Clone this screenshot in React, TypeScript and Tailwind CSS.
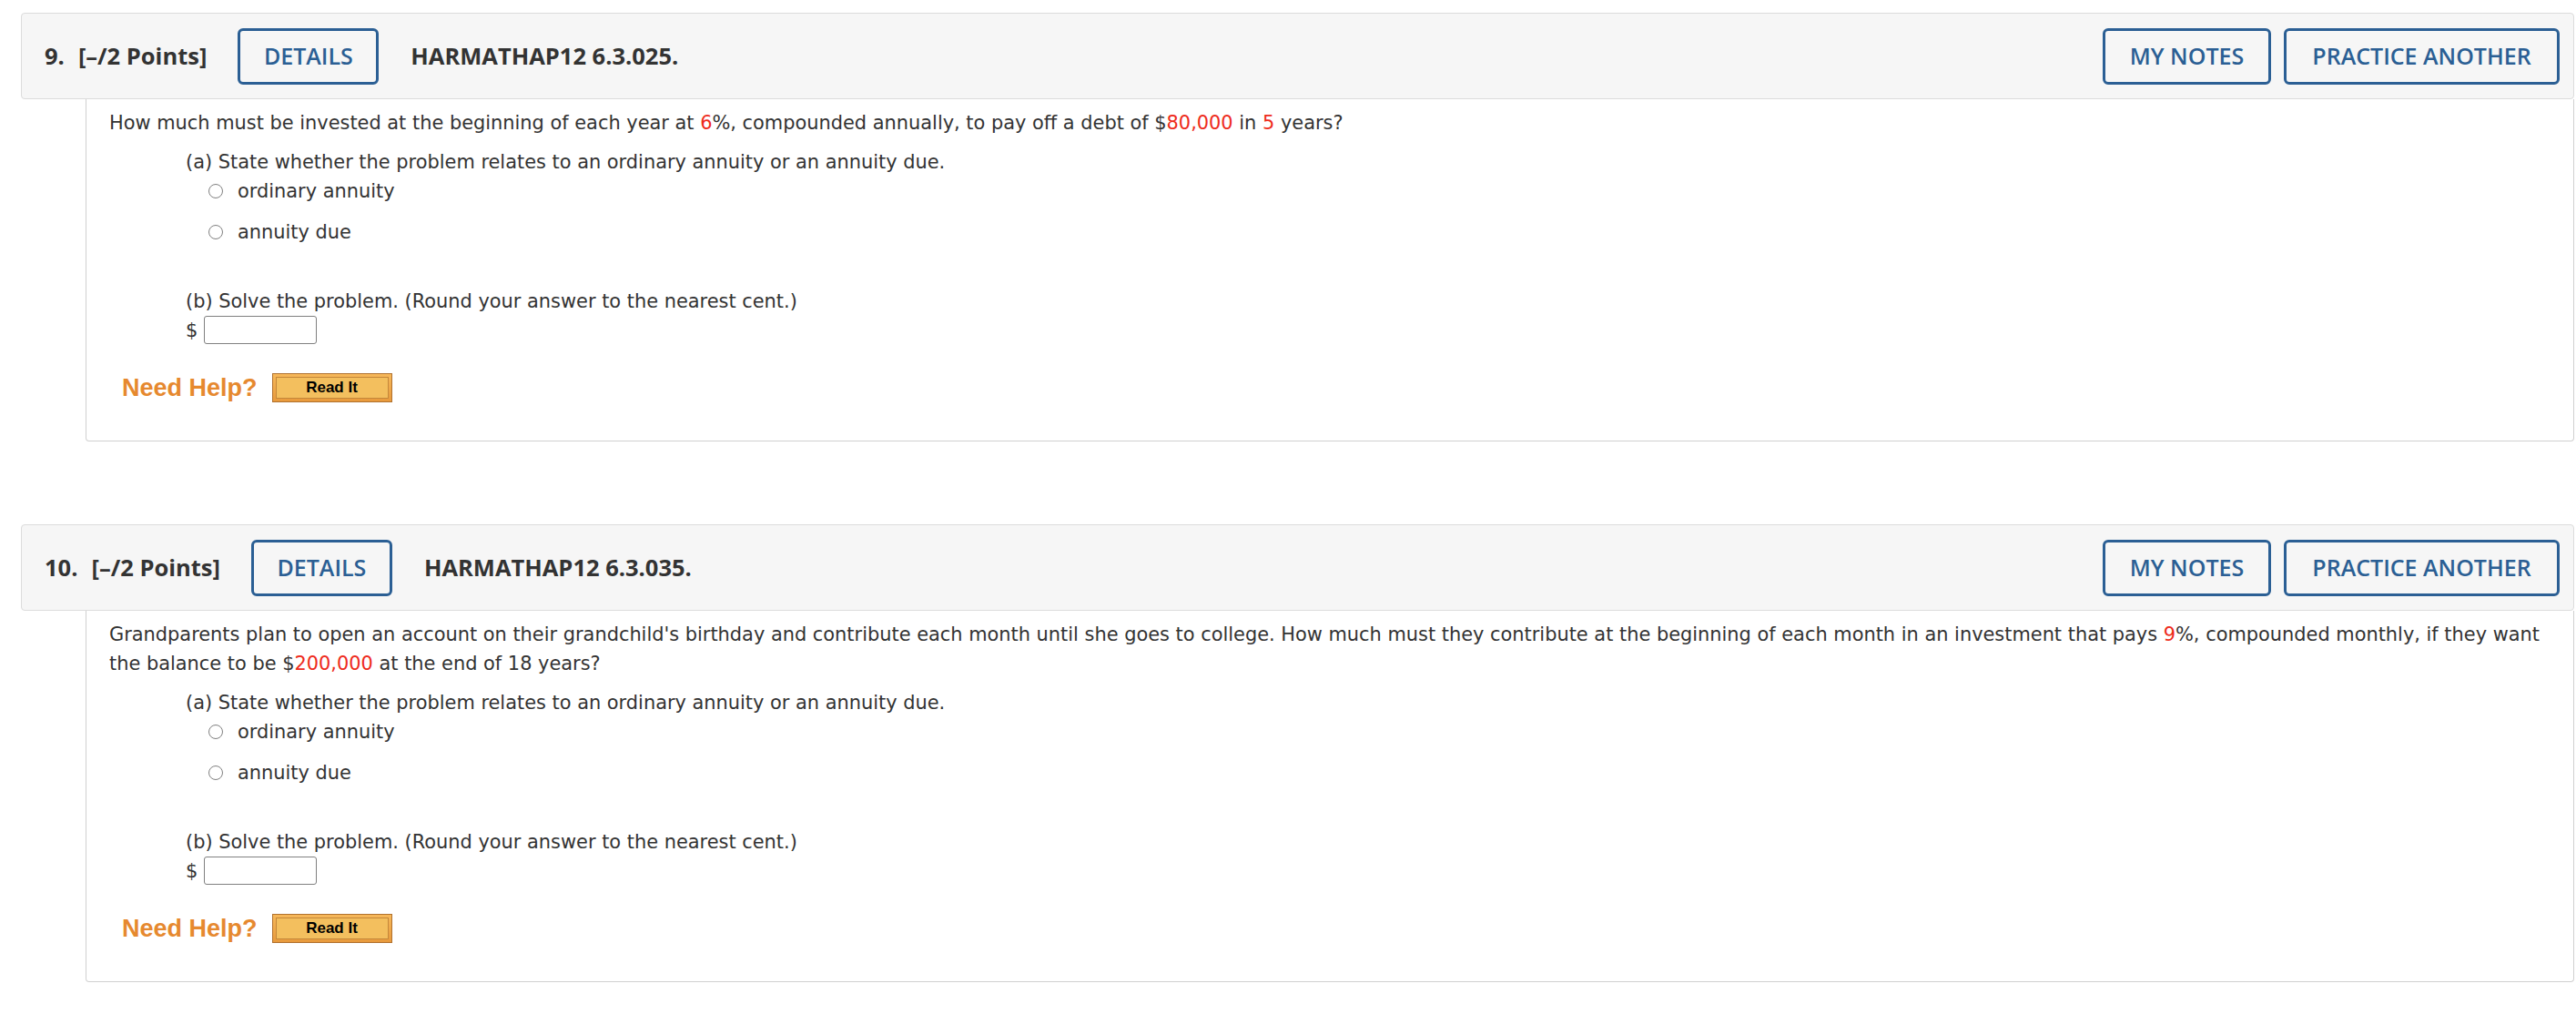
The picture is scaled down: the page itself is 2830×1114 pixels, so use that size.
import React from 'react';

const sans = { fontFamily: '"Open Sans", "Liberation Sans", sans-serif' };
const verdana = { fontFamily: '"DejaVu Sans", Verdana, sans-serif' };
const arial = { fontFamily: '"Liberation Sans", Arial, sans-serif' };

const Red: React.FC<{ children: React.ReactNode }> = ({ children }) => (
  <span className="text-[#ee2b1c]">{children}</span>
);

const OutlineButton: React.FC<{ label: string; width: string }> = ({ label, width }) => (
  <button
    className={`flex h-[62px] items-center justify-center rounded-[6px] border-[3px] border-[#2b5f94] bg-[#f6f6f6] text-[25px] font-semibold text-[#2b5f94] ${width}`}
    style={sans}
  >
    {label}
  </button>
);

const Radio: React.FC<{ label: string; className?: string }> = ({ label, className }) => (
  <label className={`flex h-[32px] items-center ${className || ''}`}>
    <span className="box-border block h-[16px] w-[16px] shrink-0 rounded-full border-[1.5px] border-[#808080] bg-white" />
    <span className="ml-[16px]">{label}</span>
  </label>
);

const ReadIt = () => (
  <button className="h-[32px] w-[132px] border border-[#b0712e] bg-gradient-to-b from-[#f6b85a] to-[#e89a3c] p-[3px]">
    <div
      className="flex h-full w-full items-center justify-center border border-[#c4873a] bg-[#f3bf5e] text-[17px] font-bold text-black"
      style={arial}
    >
      Read It
    </div>
  </button>
);

interface QuestionProps {
  num: number;
  code: string;
  children: React.ReactNode;
}

const Question: React.FC<QuestionProps> = ({ num, code, children }) => (
  <div>
    <div
      className="flex h-[95px] items-center rounded-[4px] border border-[#dcdcdc] bg-[#f6f6f6] pl-[25px] pr-[15px] text-[#333]"
      style={sans}
    >
      <div className="text-[25.5px] font-bold">
        {num}.<span className="ml-[15px]">[–/2 Points]</span>
      </div>
      <div className="ml-[34px]">
        <OutlineButton label="DETAILS" width="w-[155px]" />
      </div>
      <div className="ml-[35px] text-[25.5px] font-bold">{code}</div>
      <div className="ml-auto flex gap-[14px]">
        <OutlineButton label="MY NOTES" width="w-[185px]" />
        <OutlineButton label="PRACTICE ANOTHER" width="w-[303px]" />
      </div>
    </div>
    <div
      className="ml-[71px] rounded-b-[4px] border-x border-b border-[#d0d0d0] pb-[42px] pl-[25px] pr-[25px] pt-[10px] text-[20.9px] leading-[32px] text-[#333]"
      style={verdana}
    >
      {children}
      <div className="mt-[11px] pl-[84px]">
        <div>(a) State whether the problem relates to an ordinary annuity or an annuity due.</div>
        <div className="pl-[25px]">
          <Radio label="ordinary annuity" />
          <Radio label="annuity due" className="mt-[13px]" />
        </div>
        <div className="mt-[44px]">(b) Solve the problem. (Round your answer to the nearest cent.)</div>
        <div className="flex h-[31px] items-center">
          <span>$</span>
          <span className="ml-[7px] h-[31px] w-[124px] rounded-[3px] border border-[#808080] bg-white" />
        </div>
      </div>
      <div className="mt-[32px] flex items-center pl-[14px]">
        <span className="text-[27px] font-bold leading-none text-[#e6892f]" style={arial}>
          Need Help?
        </span>
        <span className="ml-[16px] flex">
          <ReadIt />
        </span>
      </div>
    </div>
  </div>
);

export default function App() {
  return (
    <div className="min-h-[1114px] w-[2830px] bg-white pl-[23px] pr-[2px] pt-[14px]">
      <Question num={9} code="HARMATHAP12 6.3.025.">
        <p>
          How much must be invested at the beginning of each year at <Red>6</Red>%, compounded annually, to pay off a debt
          of $<Red>80,000</Red> in <Red>5</Red> years?
        </p>
      </Question>
      <div className="mt-[91px]">
        <Question num={10} code="HARMATHAP12 6.3.035.">
          <p>
            <span className="whitespace-nowrap">
              Grandparents plan to open an account on their grandchild's birthday and contribute each month until she goes
              to college. How much must they contribute at the beginning of each month in an investment that pays{' '}
              <Red>9</Red>%, compounded monthly, if they want
            </span>
            <br />
            the balance to be $<Red>200,000</Red> at the end of 18 years?
          </p>
        </Question>
      </div>
    </div>
  );
}
